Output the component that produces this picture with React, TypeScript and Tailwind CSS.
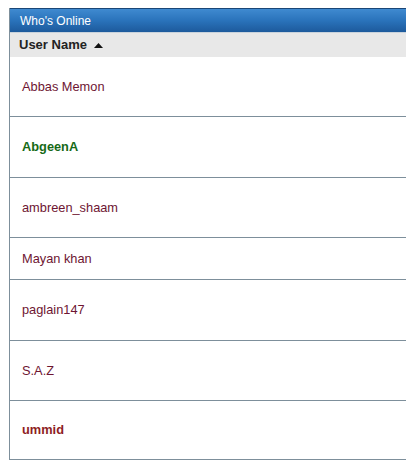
const users = [
  { name: "Abbas Memon", h: "h-[60px]", cls: "text-[#6e1532]" },
  { name: "AbgeenA", h: "h-[61px]", cls: "font-bold text-[#176a17]" },
  { name: "ambreen_shaam", h: "h-[60px]", cls: "text-[#6e1532]" },
  { name: "Mayan khan", h: "h-[42px]", cls: "text-[#6e1532]" },
  { name: "paglain147", h: "h-[61px]", cls: "text-[#6e1532]" },
  { name: "S.A.Z", h: "h-[60px]", cls: "text-[#6e1532]" },
  { name: "ummid", h: "h-[59px]", cls: "font-bold text-[#8e1e24]" },
];

export default function App() {
  return (
    <div className="h-[462px] w-[406px] overflow-hidden bg-white pl-[9px] pt-[8px] font-['Liberation_Sans',Tahoma,sans-serif]">
      <div className="border-l border-[#7d8f9b]">
        {/* Title bar */}
        <div className="flex h-[24px] items-center border-t border-[#1b4676] bg-gradient-to-b from-[#3f8ad0] via-[#2a73bb] to-[#1d5a9c] pl-[10px] text-[12px] text-white">
          Who's Online
        </div>

        {/* Column header */}
        <div className="flex h-[25px] items-center gap-[7px] border-t border-[#c9d3dc] bg-[#e8e8e8] pl-[9px] text-[13px] font-bold text-[#222]">
          <span>User Name</span>
          <svg width="9" height="6" viewBox="0 0 9 6">
            <path d="M0 6 L4.5 1 L9 6 Z" fill="#111" />
          </svg>
        </div>

        {/* Rows */}
        {users.map((u) => (
          <div
            key={u.name}
            className={`flex items-center border-b border-[#7d8f9b] pl-[12px] text-[12.8px] ${u.h} ${u.cls}`}
          >
            {u.name}
          </div>
        ))}
      </div>
    </div>
  );
}
